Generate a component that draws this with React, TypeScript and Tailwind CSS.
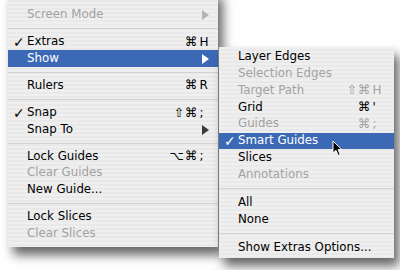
import React from "react";

// ─── Data ─────────────────────────────────────────────────────────────────────

type Item =
  | { sep: true }
  | {
      sep?: false;
      label: string;
      check?: boolean;
      disabled?: boolean;
      active?: boolean;
      sub?: boolean;
      mods?: string;
      keyChar?: string;
    };

const mainItems: Item[] = [
  { label: "Screen Mode", disabled: true, sub: true },
  { sep: true },
  { label: "Extras", check: true, keyChar: "H" },
  { label: "Show", sub: true, active: true },
  { sep: true },
  { label: "Rulers", keyChar: "R" },
  { sep: true },
  { label: "Snap", check: true, mods: "⇧", keyChar: ";" },
  { label: "Snap To", sub: true },
  { sep: true },
  { label: "Lock Guides", mods: "⌥", keyChar: ";" },
  { label: "Clear Guides", disabled: true },
  { label: "New Guide..." },
  { sep: true },
  { label: "Lock Slices" },
  { label: "Clear Slices", disabled: true },
];

const subItems: Item[] = [
  { label: "Layer Edges" },
  { label: "Selection Edges", disabled: true },
  { label: "Target Path", disabled: true, mods: "⇧", keyChar: "H" },
  { label: "Grid", keyChar: "'" },
  { label: "Guides", disabled: true, keyChar: ";" },
  { label: "Smart Guides", check: true, active: true },
  { label: "Slices" },
  { label: "Annotations", disabled: true },
  { sep: true },
  { label: "All" },
  { label: "None" },
  { sep: true },
  { label: "Show Extras Options..." },
];

const stripes =
  "bg-[repeating-linear-gradient(180deg,#efefef_0px,#efefef_2px,#e9e9e9_2px,#e9e9e9_4px)]";

// ─── Pieces ───────────────────────────────────────────────────────────────────

function Arrow({ color }: { color: string }) {
  return (
    <svg width="7" height="10" viewBox="0 0 7 10" className="block">
      <path d="M0 0 L7 5 L0 10 Z" fill={color} />
    </svg>
  );
}

function Row({ item, sub }: { item: Item; sub?: boolean }) {
  if (item.sep) {
    return (
      <div className={`flex items-center ${sub ? "h-[11.5px]" : "h-[10.75px]"}`}>
        <div className="h-px w-full bg-[#d2d2d2]" />
      </div>
    );
  }
  const color = item.active ? "text-white" : item.disabled ? "text-[#a2a2a2]" : "text-black";
  return (
    <div
      className={`flex items-center ${sub ? "h-[16.75px]" : "h-[16.5px]"} ${color} ${
        item.active ? "bg-[#3c69b6]" : ""
      }`}
    >
      <span className="w-[19px] shrink-0 pl-[5px] text-[14px] font-bold leading-none">
        {item.check ? "✓" : ""}
      </span>
      <span className="flex-1 whitespace-nowrap">{item.label}</span>
      {item.keyChar && (
        <>
          <span className="pr-[1px] text-right text-[12.5px]">{item.mods}</span>
          <span className={`${sub ? "w-[36px]" : "w-[33px]"} whitespace-nowrap text-[12.5px]`}>
            ⌘<span className="ml-[2px] text-[12px]">{item.keyChar}</span>
          </span>
        </>
      )}
      {item.sub && (
        <span className="pr-[9px]">
          <Arrow color={item.active ? "#ffffff" : item.disabled ? "#b4b4b4" : "#3a3a3a"} />
        </span>
      )}
    </div>
  );
}

function Cursor() {
  return (
    <svg
      width="11"
      height="17"
      viewBox="0 0 11 17"
      className="absolute left-[113px] top-[93px]"
    >
      <path
        d="M1 1 L1 13 L4 10.3 L6.2 15.5 L8.2 14.6 L6 9.6 L9.8 9.6 Z"
        fill="#000"
        stroke="#fff"
        strokeWidth="1"
        strokeLinejoin="round"
      />
    </svg>
  );
}

// ─── Component ────────────────────────────────────────────────────────────────

export default function App() {
  return (
    <div
      className="flex h-[270px] w-[400px] items-start overflow-hidden bg-white text-[11.8px]"
      style={{ fontFamily: '"DejaVu Sans", sans-serif' }}
    >
      {/* Main menu */}
      <div
        className={`ml-[8px] -mt-[10px] w-[210px] pt-[16.5px] pb-[5px] shadow-[5px_8px_10px_rgba(0,0,0,0.6)] ${stripes}`}
      >
        {mainItems.map((it, i) => (
          <Row key={i} item={it} />
        ))}
      </div>

      {/* Show submenu */}
      <div
        className={`relative z-10 ml-[1px] mt-[47px] w-[175px] pt-[1.75px] pb-[2px] shadow-[5px_8px_10px_rgba(0,0,0,0.6)] ${stripes}`}
      >
        {subItems.map((it, i) => (
          <Row key={i} item={it} sub />
        ))}
        <Cursor />
      </div>
    </div>
  );
}
